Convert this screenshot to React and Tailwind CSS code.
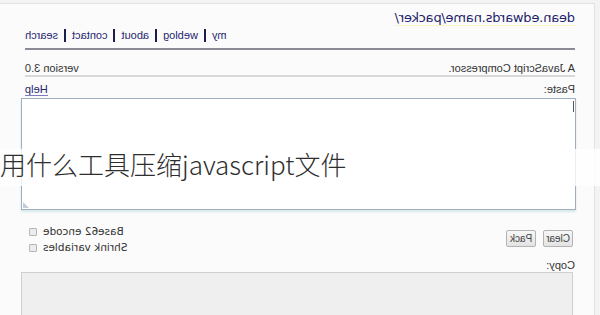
import React from 'react';

const navLinks = ['my', 'weblog', 'about', 'contact', 'search'];

const Checkbox = ({ label }) => (
  <label className="flex items-center justify-end gap-[6px] h-[16px] font-['DejaVu_Sans',Verdana,sans-serif] text-[10.5px]">
    <span>{label}</span>
    <span className="w-[8px] h-[8px] border border-[#b5b5b5] bg-[#ececec] rounded-[1px]" />
  </label>
);

const Button = ({ children }) => (
  <button className="h-[17px] w-[30px] text-[10px] leading-none text-[#444] bg-gradient-to-b from-[#f7f7f7] to-[#e3e3e3] border border-[#b3b3b3] rounded-[2px]">
    {children}
  </button>
);

const App = () => {
  return (
    <div className="relative w-[600px] h-[315px] overflow-hidden bg-[#f3f3f3] font-['Liberation_Sans',Arial,sans-serif] text-[11px] text-[#333]">
      {/* the whole page is shown mirrored */}
      <div className="h-full -scale-x-100">
        <div className="h-full ml-[5px] mt-[3px] bg-[#fbfbfb] border-l border-t border-[#e2e2e2] pl-[19px] pr-[20px]">
          <div className="w-[550px]">
            <h1 className="h-[24px] text-[13px] leading-[28px] text-[#1d1d6b] font-['DejaVu_Sans',Verdana,sans-serif] tracking-[-0.2px]">
              <span className="border-b border-[#fbf3c4]">dean.edwards.name/packer/</span>
            </h1>
            <nav className="flex justify-end items-center h-[14px] text-[#26266e]">
              {navLinks.map((link, i) => (
                <span key={link} className="flex items-center">
                  {i > 0 && <span className="mx-[6px] h-[13px] border-l-2 border-[#1d1d4d]" />}
                  <span>{link}</span>
                </span>
              ))}
            </nav>
            <div className="mt-[6px] border-t-2 border-[#8a8a94]" />
            <div className="flex justify-between items-center pt-[11px] leading-[14px] border-b-2 border-[#d8d8d8]">
              <span>A JavaScript Compressor.</span>
              <span>version 3.0</span>
            </div>
            <div className="flex justify-between items-center pt-[5px] leading-[14px]">
              <span>Paste:</span>
              <span className="text-[#26266e] border-b border-[#7b7bc0] leading-[12px]">Help</span>
            </div>
          </div>
          <div className="relative mt-[2px] -ml-px w-[555px] h-[112px] bg-white border border-[#9fafc0] shadow-[0_2px_2px_rgba(190,220,230,0.6)]">
            <div className="absolute left-[1px] top-[2px] h-[11px] border-l border-[#555]" />
            <div className="absolute right-[1px] bottom-[1px] w-0 h-0 border-l-[6px] border-l-transparent border-b-[6px] border-b-[#c4ccd6]" />
          </div>
          <div className="w-[550px] flex justify-between mt-[14px]">
            <div className="flex gap-[7px] pl-[2px] pt-[6px]">
              <Button>Clear</Button>
              <Button>Pack</Button>
            </div>
            <div className="flex flex-col pr-[4px]">
              <Checkbox label="Base62 encode" />
              <Checkbox label="Shrink variables" />
            </div>
          </div>
          <div className="mt-[2px] h-[14px] leading-[14px]">Copy:</div>
          <div className="ml-[2px] w-[552px] h-[60px] bg-[#efefef] border border-[#cfcfcf]" />
        </div>
      </div>

      {/* caption band laid over the picture */}
      <div className="absolute left-0 right-0 top-[149px] h-[37px] pb-[7px] bg-white/80 flex items-center">
        <span className="text-[26px] leading-none text-[#2e2e2e] font-['Noto_Sans_CJK_SC','Noto_Sans',sans-serif] font-light">
          用什么工具压缩javascript文件
        </span>
      </div>
    </div>
  );
};

export default App;
